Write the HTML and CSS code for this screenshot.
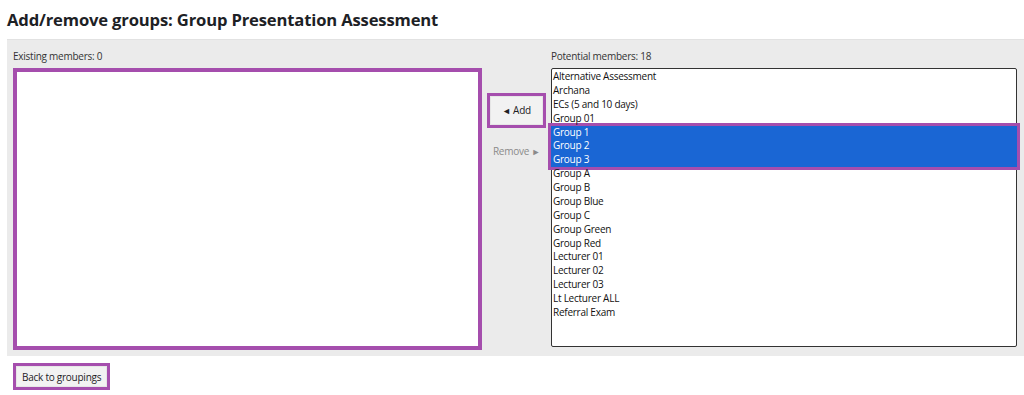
FILE: index.html
```html
<!DOCTYPE html>
<html>
<head>
    <title>Add/remove groups</title>
    <link rel="stylesheet" href="styles.css">
</head>
<body>
    <h2 class="page-title">Add/remove groups: Group Presentation Assessment</h2>

    <div class="members-panel">
        <div class="column column-existing">
            <label class="list-label">Existing members: 0</label>
            <div class="member-box highlight"></div>
        </div>

        <div class="column column-buttons">
            <div class="btn-frame highlight">
                <button class="btn"><span class="arrow">&#9668;</span> Add</button>
            </div>
            <button class="btn btn-disabled">Remove <span class="arrow">&#9658;</span></button>
        </div>

        <div class="column column-potential">
            <label class="list-label">Potential members: 18</label>
            <div class="list-box">
                <div class="option">Alternative Assessment</div>
                <div class="option">Archana</div>
                <div class="option">ECs (5 and 10 days)</div>
                <div class="option">Group 01</div>
                <div class="selected-group">
                    <div class="option selected">Group 1</div>
                    <div class="option selected">Group 2</div>
                    <div class="option selected">Group 3</div>
                </div>
                <div class="option">Group A</div>
                <div class="option">Group B</div>
                <div class="option">Group Blue</div>
                <div class="option">Group C</div>
                <div class="option">Group Green</div>
                <div class="option">Group Red</div>
                <div class="option">Lecturer 01</div>
                <div class="option">Lecturer 02</div>
                <div class="option">Lecturer 03</div>
                <div class="option">Lt Lecturer ALL</div>
                <div class="option">Referral Exam</div>
            </div>
        </div>
    </div>

    <div class="btn-frame highlight back-frame">
        <button class="btn">Back to groupings</button>
    </div>
</body>
</html>
```

FILE: styles.css
```css
:root {
    --highlight-color: #a54ead;
    --panel-color: #ebebeb;
    --select-color: #1a66d4;
    --text-color: #1d2125;
}

body {
    font-family: 'Open Sans', 'Noto Sans', sans-serif;
    margin: 0;
    padding: 8px 0 0 7px;
    color: var(--text-color);
    background: white;
    overflow: hidden;
}

.page-title {
    font-size: 16.6px;
    font-weight: 700;
    line-height: 24px;
    margin: 0 0 7px 0;
    letter-spacing: -0.15px;
}

.members-panel {
    display: flex;
    background: var(--panel-color);
    padding: 8px 0 6px 6px;
    border-top: 1px solid #e2e2e2;
    height: 302px;
}

.column {
    display: flex;
    flex-direction: column;
}

.list-label {
    font-size: 10px;
    letter-spacing: -0.25px;
    line-height: 14px;
    height: 14px;
    margin-bottom: 6px;
    padding-top: 1px;
    color: #333;
}

.highlight {
    border: 4px solid var(--highlight-color);
}

.member-box {
    width: 461px;
    height: 274px;
    margin-top: -1px;
    background: white;
}

.column-buttons {
    width: 69px;
    align-items: center;
    padding-top: 45px;
}

.btn-frame {
    display: inline-flex;
    border-width: 3px;
}

.btn {
    font-family: inherit;
    font-size: 10px;
    letter-spacing: -0.25px;
    line-height: 14px;
    color: var(--text-color);
    background: #f2f2f2;
    border: 1px solid #e6e6e6;
    padding: 4px 5px;
    cursor: pointer;
}

.arrow {
    font-size: 9px;
    vertical-align: 0;
}

.column-buttons .btn-frame .btn {
    padding: 6px 11px;
}

.btn-disabled {
    background: transparent;
    border: none;
    color: #8a8a8a;
    margin-top: 15px;
    padding: 1px 4px;
}

.list-box {
    width: 464px;
    height: 276px;
    margin-top: -1px;
    background: white;
    border: 1px solid #333;
    border-radius: 2px;
    padding-top: 1px;
    box-sizing: content-box;
}

.option {
    font-size: 10px;
    letter-spacing: -0.25px;
    line-height: 13.875px;
    height: 13.875px;
    padding-left: 1px;
    color: #111;
    white-space: nowrap;
}

.selected-group {
    box-shadow: 0 0 0 3px var(--highlight-color);
    margin: 0 -1px 0 -1px;
    padding-left: 1px;
    background: var(--select-color);
}

.option.selected {
    color: white;
}

.back-frame {
    margin: 7px 0 0 6px;
}

.back-frame .btn {
    padding: 3px 5px 2px 5px;
}
```
